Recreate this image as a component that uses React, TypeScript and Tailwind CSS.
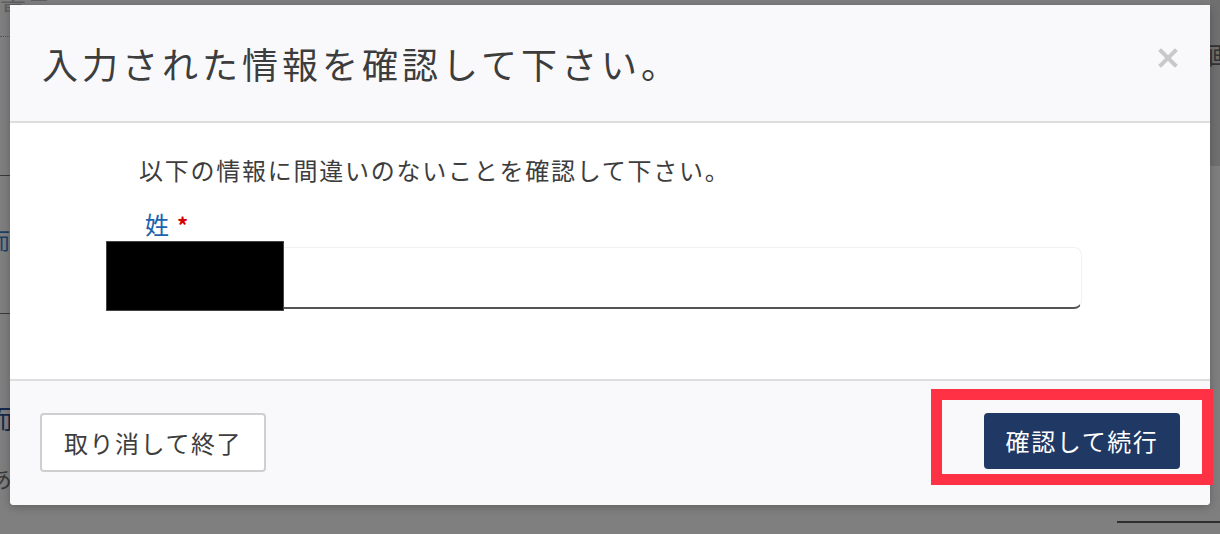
const jp = "font-['Hiragino_Sans','Noto_Sans_CJK_JP',sans-serif]";

function CloseIcon() {
  return (
    <svg width="20" height="20" viewBox="0 0 20 20" className="block">
      <path d="M3 3 L17 17 M17 3 L3 17" stroke="#c9c9c9" strokeWidth="4" strokeLinecap="square" />
    </svg>
  );
}

// the page behind the dialog, mostly hidden; only slivers show at the edges
function BackdropPage() {
  return (
    <div className="absolute inset-0 overflow-hidden bg-[#7f7f7f]">
      <div className={`${jp} absolute left-0 top-[-14px] text-[26px] leading-none text-[#5f5f5f]`}>書三</div>
      <div className="absolute left-0 top-[36px] w-[10px] border-t border-dotted border-[#555]" />
      <div className="absolute left-0 top-[175px] w-[10px] border-t border-[#3a3a3a]" />
      <div className={`${jp} absolute left-[-12px] top-[228px] text-[22px] leading-none text-[#1f3f66]`}>而</div>
      <div className="absolute left-0 top-[313px] w-[10px] border-t border-[#3a3a3a]" />
      <div className={`${jp} absolute left-[-13px] top-[405px] text-[26px] leading-none text-[#17294a]`}>而</div>
      <div className={`${jp} absolute left-[-12px] top-[466px] text-[24px] leading-none text-[#3a3a3a]`}>あ</div>
      <div className="absolute right-0 top-0 h-[166px] w-[10px] bg-[#707070]" />
      <div className={`${jp} absolute left-[1208px] top-[42px] text-[24px] leading-none text-[#333]`}>画</div>
      <div className="absolute left-[1117px] top-[521px] w-[103px] border-t-2 border-[#2e2e2e]" />
    </div>
  );
}

export default function App() {
  return (
    <div className={`${jp} relative h-[534px] w-[1220px] overflow-hidden pl-[10px] pt-[5px]`}>
      <BackdropPage />

      <div className="relative flex h-[500px] w-[1200px] flex-col rounded-b-[4px] bg-white shadow-[0_2px_10px_rgba(0,0,0,0.25)]">
        <header className="flex h-[118px] shrink-0 items-center justify-between border-b-2 border-[#dedede] bg-[#f9f9fb] px-[32px]">
          <h1 className="text-[36px] font-normal leading-none tracking-[4px] text-[#3d3d3d]">
            入力された情報を確認して下さい。
          </h1>
          <button className="mt-[-10px]">
            <CloseIcon />
          </button>
        </header>

        <section className="flex h-[256px] shrink-0 flex-col bg-white pl-[96px] pt-[31px]">
          <p className="pl-[33px] text-[24px] leading-[32px] tracking-[1.75px] text-[#3d3d3d]">
            以下の情報に間違いのないことを確認して下さい。
          </p>
          <label className="mt-[22px] flex items-center gap-[8px] pl-[39px] text-[24px] leading-[32px] text-[#1b63ad]">
            姓<span className="text-[22px] font-bold text-[#d40000]">*</span>
          </label>
          <div className="relative mt-[7px] h-[62px] w-[976px] rounded-[8px] border border-b-2 border-[#f1f1f1] border-b-[#555] border-l-transparent bg-white">
            {/* redaction block over the entered value */}
            <div className="absolute left-[-1px] top-[-7px] h-[70px] w-[178px] border border-[#444] bg-black" />
          </div>
        </section>

        <footer className="flex flex-1 items-center justify-between rounded-b-[4px] border-t-2 border-[#dedede] bg-[#f9f9fb] pl-[30px]">
          <button className="mt-[-1px] h-[59px] w-[226px] rounded-[4px] border-2 border-[#cfcfcf] bg-white text-[24px] tracking-[1.5px] text-[#3d3d3d]">
            取り消して終了
          </button>
          <div className="mr-[-3px] mt-[-13px] border-[11px] border-[#ff3145] pb-[5px] pl-[42px] pr-[22px] pt-[13px]">
            <button className="h-[56px] w-[196px] rounded-[4px] bg-[#1f3864] text-[24px] tracking-[1.6px] text-white">
              確認して続行
            </button>
          </div>
        </footer>
      </div>
    </div>
  );
}
